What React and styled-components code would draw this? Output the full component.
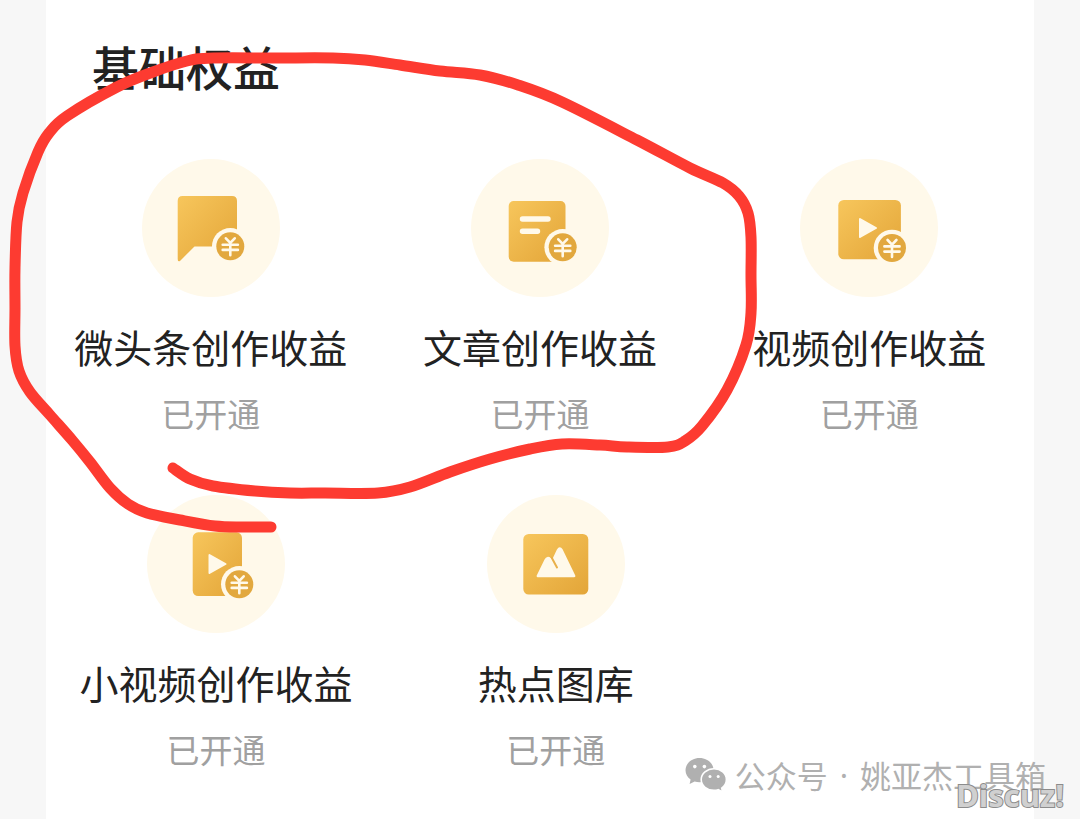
import styled, { createGlobalStyle } from "styled-components";

const GlobalStyle = createGlobalStyle`
  * {
    box-sizing: border-box;
  }

  body {
    margin: 0;
    background-color: #f7f7f7;
    font-family: "Noto Sans CJK SC", "Noto Sans", sans-serif;
  }

  h2, h3, p, ul {
    margin: 0;
    padding: 0;
  }
`;

const Container = styled.div`
  position: relative;
  min-height: 100vh;
  padding: 0 46px;
  overflow: hidden;
`;

const Panel = styled.section`
  min-height: 100vh;
  padding: 36px 0;
  background-color: white;
`;

const Title = styled.h2`
  padding-left: 46px;
  font-size: 47px;
  font-weight: 500;
  line-height: 60px;
  color: #222;
`;

const Row = styled.ul`
  display: grid;
  grid-template-columns: repeat(3, ${({ $column }) => $column});
  margin-top: 63px;
  list-style: none;

  & + & {
    margin-top: 60px;
  }
`;

const Item = styled.li`
  display: flex;
  flex-direction: column;
  align-items: center;
  white-space: nowrap;
`;

const IconCircle = styled.div`
  width: 138px;
  height: 138px;
  border-radius: 50%;
  background-color: #fff9ea;

  svg {
    display: block;
  }
`;

const Name = styled.h3`
  margin-top: 23px;
  font-size: 39px;
  font-weight: 400;
  line-height: 52px;
  color: #222;
`;

const Status = styled.p`
  margin-top: 19px;
  font-size: 33px;
  font-weight: 400;
  line-height: 44px;
  color: #a0a0a0;
`;

const Marker = styled.svg`
  position: absolute;
  top: 0;
  left: 0;
  width: 100%;
  height: auto;
  pointer-events: none;
`;

const Account = styled.div`
  position: absolute;
  right: 34px;
  bottom: 21px;
  display: flex;
  align-items: center;
  gap: 8px;
  font-size: 31px;
  line-height: 46px;
  color: #b0b0b0;
  white-space: nowrap;
`;

const Dot = styled.span`
  margin: 0 4px;
  font-family: "Noto Sans", sans-serif;
`;

const Stamp = styled.div`
  position: absolute;
  right: 16px;
  bottom: 4px;
  font-family: "Open Sans", "Noto Sans", sans-serif;
  font-size: 31px;
  font-weight: 700;
  line-height: 40px;
  color: #d0d0d0;
  -webkit-text-stroke: 2px #8c8c8c;
  paint-order: stroke fill;
`;

const Coin = ({ x, y }) => (
  <g transform={`translate(${x} ${y})`}>
    <circle r="18.3" fill="#fff9ea" />
    <circle r="14" fill="#e2a83e" />
    <path
      d="M-4.4 -8L0 -3.4L4.4 -8M-7.6 -1.6H7.6M-7.6 3.6H7.6M0 -3.4V9"
      fill="none"
      stroke="#fff9ea"
      strokeWidth="2.6"
      strokeLinecap="round"
    />
  </g>
);

const Play = ({ x, y }) => (
  <path
    transform={`translate(${x} ${y})`}
    d="M1 1L17 10L1 19Z"
    fill="#fff9ea"
    stroke="#fff9ea"
    strokeWidth="2"
    strokeLinejoin="round"
  />
);

const icons = {
  post: (
    <>
      <path d="M40.5 37H90Q95 37 95 42V87.4H52.5L38.5 101.5Q35.7 103.8 35.7 100V42Q35.7 37 40.5 37Z" fill="url(#gold)" />
      <Coin x={88.3} y={87.3} />
    </>
  ),
  article: (
    <>
      <rect x="37.7" y="42" width="56.8" height="60.7" rx="5" fill="url(#gold)" />
      <path d="M51.5 60H77M51.5 72.3H66.5" stroke="#fff9ea" strokeWidth="5.4" strokeLinecap="round" />
      <Coin x={91.7} y={88.3} />
    </>
  ),
  video: (
    <>
      <rect x="38.3" y="41" width="62.6" height="59.3" rx="5.5" fill="url(#gold)" />
      <Play x={59} y={59} />
      <Coin x={92} y={89} />
    </>
  ),
  shortVideo: (
    <>
      <rect x="45.7" y="37.3" width="49.3" height="63.7" rx="5.5" fill="url(#gold)" />
      <Play x={61.5} y={59} />
      <Coin x={92.3} y={89.3} />
    </>
  ),
  gallery: (
    <>
      <rect x="36.3" y="38.9" width="65" height="60.6" rx="5.5" fill="url(#gold)" />
      <path
        d="M50.8 81L58.6 65Q60.4 61.6 63.2 64.2L65.6 66.6L71 55Q72.7 52 74.6 55L87.2 81Z"
        fill="#fff9ea"
        stroke="#fff9ea"
        strokeWidth="2.4"
        strokeLinejoin="round"
      />
      <path d="M64.6 62.6L70 72.4" stroke="#e9b04a" strokeWidth="2" strokeLinecap="round" />
    </>
  ),
};

const rows = [
  {
    column: "1fr",
    items: [
      { icon: "post", name: "微头条创作收益" },
      { icon: "article", name: "文章创作收益" },
      { icon: "video", name: "视频创作收益" },
    ],
  },
  {
    column: "34.4%",
    items: [
      { icon: "shortVideo", name: "小视频创作收益" },
      { icon: "gallery", name: "热点图库" },
    ],
  },
];

const strokePoints = [
  [271, 527], [243, 527], [215, 526], [180, 520], [147, 513], [128, 504], [110, 488],
  [90, 462], [72, 440], [50, 415], [30, 392], [19, 371], [15, 346], [15, 308],
  [15, 268], [17, 222], [23, 193], [38, 152], [49, 133], [67, 116], [117, 87],
  [153, 72], [187, 61], [213, 58], [275, 58], [333, 58], [365, 60], [400, 65],
  [440, 71], [480, 75], [518, 85], [562, 102], [637, 140], [690, 168], [723, 183],
  [739, 196], [748, 213], [751, 237], [751, 275], [751, 313], [746, 345], [727, 390],
  [702, 426], [685, 441], [668, 447], [627, 447], [600, 445], [562, 444], [530, 449],
  [490, 459], [450, 472], [410, 487], [378, 493], [325, 493], [290, 493], [255, 491],
  [213, 486], [190, 479], [173, 468],
];

// smooth curve that passes through every point
const toPath = (points) => {
  let d = `M${points[0].join(" ")}`;

  for (let i = 0; i < points.length - 1; i++) {
    const p0 = points[i - 1] || points[i];
    const p1 = points[i];
    const p2 = points[i + 1];
    const p3 = points[i + 2] || p2;

    d += `C${p1[0] + (p2[0] - p0[0]) / 6} ${p1[1] + (p2[1] - p0[1]) / 6}`;
    d += ` ${p2[0] - (p3[0] - p1[0]) / 6} ${p2[1] - (p3[1] - p1[1]) / 6}`;
    d += ` ${p2[0]} ${p2[1]}`;
  }

  return d;
};

const WechatIcon = () => (
  <svg width="42" height="36" viewBox="0 0 42 36" aria-hidden="true">
    <path d="M14.5 1C6.8 1 0.5 6.4 0.5 13.2C0.5 17 2.5 20.3 5.6 22.5L4.6 27L9.6 24.5Q12 25.3 14.5 25.3C22.3 25.3 28.6 20 28.6 13.2S22.3 1 14.5 1Z" fill="#b0b0b0" />
    <path
      d="M29 11.8C22 11.8 16.2 16.6 16.2 22.6S22 33.4 29 33.4Q31.2 33.4 33.2 32.7L37.6 35L36.7 31.1C39.6 29.1 41.4 26.1 41.4 22.6C41.4 16.6 36 11.8 29 11.8Z"
      fill="#b0b0b0"
      stroke="white"
      strokeWidth="1.6"
    />
    <g fill="white">
      <circle cx="9.8" cy="9.6" r="1.8" />
      <circle cx="19.4" cy="9.6" r="1.8" />
      <circle cx="25" cy="19.4" r="1.5" />
      <circle cx="33.2" cy="19.4" r="1.5" />
    </g>
  </svg>
);

const App = () => {
  return (
    <Container>
      <GlobalStyle />
      <svg width="0" height="0" style={{ position: "absolute" }} aria-hidden="true">
        <linearGradient id="gold" x1="0" y1="0" x2="1" y2="1">
          <stop offset="0" stopColor="#f7c65c" />
          <stop offset="1" stopColor="#e3a538" />
        </linearGradient>
      </svg>
      <Panel>
        <Title>基础权益</Title>
        {rows.map((row) => (
          <Row key={row.column} $column={row.column}>
            {row.items.map((item) => (
              <Item key={item.name}>
                <IconCircle>
                  <svg width="138" height="138" viewBox="0 0 138 138" aria-hidden="true">{icons[item.icon]}</svg>
                </IconCircle>
                <Name>{item.name}</Name>
                <Status>已开通</Status>
              </Item>
            ))}
          </Row>
        ))}
      </Panel>
      <Marker viewBox="0 0 1080 819" aria-hidden="true">
        <path d={toPath(strokePoints)} fill="none" stroke="#fd3b31" strokeWidth="11" strokeLinecap="round" strokeLinejoin="round" />
      </Marker>
      <Account>
        <WechatIcon />
        <span>公众号</span>
        <Dot>·</Dot>
        <span>姚亚杰工具箱</span>
      </Account>
      <Stamp>Discuz!</Stamp>
    </Container>
  );
};

export default App;
